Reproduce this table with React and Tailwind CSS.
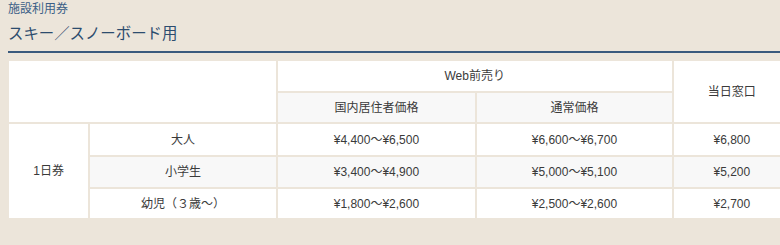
export default function App() {
  const font = { fontFamily: '"Liberation Sans", "Noto Sans CJK JP", sans-serif' };
  const rows = [
    { label: "大人", a: "¥4,400〜¥6,500", b: "¥6,600〜¥6,700", c: "¥6,800", gray: false, h: "h-[31px]" },
    { label: "小学生", a: "¥3,400〜¥4,900", b: "¥5,000〜¥5,100", c: "¥5,200", gray: true, h: "h-[30px]" },
    { label: "幼児（３歳〜）", a: "¥1,800〜¥2,600", b: "¥2,500〜¥2,600", c: "¥2,700", gray: false, h: "h-[29px]" },
  ];
  return (
    <div className="w-[780px] h-[245px] overflow-hidden bg-[#ece5da]" style={font}>
      <div className="pl-[8px]">
        <p className="text-[12px] leading-[19px] text-[#3b5f87]">施設利用券</p>
        <h2 className="mt-[3px] text-[15.4px] leading-[24px] font-normal text-[#2c4c6e] pb-[5px] border-b-2 border-[#3a5a7d]">
          スキー／スノーボード用
        </h2>
      </div>
      <table className="mt-[6px] ml-[7px] border-separate border-spacing-[2px] table-fixed text-[12px] text-[#3a3a3a] w-[785px]">
        <colgroup>
          <col className="w-[79px]" />
          <col className="w-[185px]" />
          <col className="w-[197px]" />
          <col className="w-[194px]" />
          <col className="w-[116px]" />
        </colgroup>
        <thead>
          <tr className="h-[30px]">
            <th colSpan={2} rowSpan={2} className="bg-white p-0 font-normal"></th>
            <th colSpan={2} className="bg-white p-0 font-normal text-center">Web前売り</th>
            <th rowSpan={2} className="bg-white p-0 font-normal text-center">当日窓口</th>
          </tr>
          <tr className="h-[29px]">
            <th className="bg-[#f8f8f8] p-0 font-normal text-center">国内居住者価格</th>
            <th className="bg-[#f8f8f8] p-0 font-normal text-center">通常価格</th>
          </tr>
        </thead>
        <tbody>
          {rows.map((r, i) => (
            <tr key={r.label} className={r.h}>
              {i === 0 && (
                <td rowSpan={3} className="bg-white p-0 text-center">1日券</td>
              )}
              <td className={`${r.gray ? "bg-[#f8f8f8]" : "bg-white"} p-0 text-center`}>{r.label}</td>
              <td className={`${r.gray ? "bg-[#f8f8f8]" : "bg-white"} p-0 text-center`}>{r.a}</td>
              <td className={`${r.gray ? "bg-[#f8f8f8]" : "bg-white"} p-0 text-center`}>{r.b}</td>
              <td className={`${r.gray ? "bg-[#f8f8f8]" : "bg-white"} p-0 text-center`}>{r.c}</td>
            </tr>
          ))}
        </tbody>
      </table>
    </div>
  );
}
